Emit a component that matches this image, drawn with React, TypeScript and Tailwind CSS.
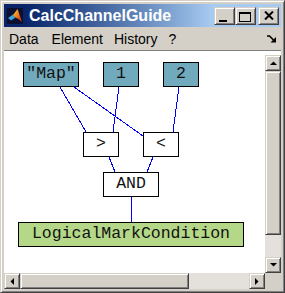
import React from 'react'

const raised =
  'bg-[#d4d0c8] border border-t-[#d4d0c8] border-l-[#d4d0c8] border-r-[#404040] border-b-[#404040] shadow-[inset_1px_1px_0_#fff,inset_-1px_-1px_0_#808080]'

const node =
  "absolute flex items-center justify-center border border-black font-['Liberation_Mono',monospace] text-[16.5px] leading-none text-[#111]"

function MatlabIcon() {
  return (
    <svg width="16" height="16" viewBox="0 0 16 16">
      <defs>
        <linearGradient id="peak" x1="0" y1="0" x2="1" y2="1">
          <stop offset="0" stopColor="#ffd23a" />
          <stop offset="0.5" stopColor="#f07a1a" />
          <stop offset="1" stopColor="#b8220e" />
        </linearGradient>
      </defs>
      <rect width="16" height="16" fill="#0c1030" />
      <polygon points="1,10 6,6.5 8.5,9.5 4,12.5" fill="#3fa3d8" />
      <polygon points="6,7 10.5,1 15,14 11.5,11 8.5,9.5" fill="url(#peak)" />
    </svg>
  )
}

function Arrow({ dir }: { dir: 'up' | 'down' | 'left' | 'right' }) {
  const pts = {
    up: '0,4 7,4 3.5,0.5',
    down: '0,0 7,0 3.5,3.5',
    left: '4,0 4,7 0.5,3.5',
    right: '0,0 0,7 3.5,3.5',
  }[dir]
  const w = dir === 'up' || dir === 'down' ? 7 : 4
  const h = dir === 'up' || dir === 'down' ? 4 : 7
  return (
    <svg width={w} height={h} viewBox={`0 0 ${w} ${h}`}>
      <polygon points={pts} fill="#000" />
    </svg>
  )
}

export default function App() {
  return (
    <div
      className={`w-[285px] h-[293px] p-[3px] flex flex-col font-['Liberation_Sans',sans-serif] select-none ${raised}`}
    >
      {/* title bar */}
      <div className="h-[23px] flex items-center pl-[3px] pr-[2px] bg-linear-to-r from-[#0a246a] from-[8%] to-[#a6caf0] to-[75%]">
        <MatlabIcon />
        <span className="ml-[6px] text-white font-bold text-[16px] leading-none">CalcChannelGuide</span>
        <div className="ml-auto flex items-center">
          <button className={`w-[21px] h-[18px] relative ${raised}`}>
            <span className="absolute left-[4px] top-[12px] w-[8px] h-[2px] bg-black" />
          </button>
          <button className={`w-[21px] h-[18px] relative ${raised}`}>
            <span className="absolute left-[3px] top-[4px] w-[12px] h-[10px] border border-black border-t-2" />
          </button>
          <button className={`ml-[2px] w-[21px] h-[18px] flex items-center justify-center ${raised}`}>
            <svg width="10" height="9" viewBox="0 0 10 9">
              <path d="M1 0.5 L9 8.5 M9 0.5 L1 8.5" stroke="#000" strokeWidth="2" />
            </svg>
          </button>
        </div>
      </div>

      {/* menu bar */}
      <div className="h-[23px] flex items-center pl-[5px] pr-[4px] gap-[11px] text-[14px] text-black leading-none">
        <span>Data</span>
        <span className="ml-[2px]">Element</span>
        <span>History</span>
        <span>?</span>
        <svg className="ml-auto" width="10" height="8" viewBox="0 0 10 8">
          <path d="M0 1 H2.5 L6.5 5" stroke="#000" strokeWidth="1.6" fill="none" />
          <polygon points="9,7.5 3.5,7.5 9,2" fill="#000" />
        </svg>
      </div>

      {/* client area */}
      <div className="flex-1 flex flex-col border-t border-[#808080]">
        <div className="flex-1 flex">
          <div className="relative flex-1 bg-white overflow-hidden">
            <svg className="absolute inset-0" width="261" height="222" shapeRendering="crispEdges">
              <g stroke="#0000ff" strokeWidth="1">
                <line x1="56" y1="36" x2="82" y2="81" />
                <line x1="70" y1="36" x2="139" y2="85" />
                <line x1="115" y1="36" x2="109" y2="81" />
                <line x1="175" y1="36" x2="169" y2="81" />
                <line x1="105" y1="106" x2="111" y2="121" />
                <line x1="149" y1="106" x2="143" y2="121" />
                <line x1="127.5" y1="146" x2="127.5" y2="171" />
              </g>
            </svg>
            <div className={`${node} left-[19px] top-[11px] w-[56px] h-[25px] bg-[#72aabd]`}>"Map"</div>
            <div className={`${node} left-[99px] top-[11px] w-[36px] h-[25px] bg-[#72aabd]`}>1</div>
            <div className={`${node} left-[159px] top-[11px] w-[36px] h-[25px] bg-[#72aabd]`}>2</div>
            <div className={`${node} left-[79px] top-[81px] w-[36px] h-[25px] bg-white`}>&gt;</div>
            <div className={`${node} left-[139px] top-[81px] w-[36px] h-[25px] bg-white`}>&lt;</div>
            <div className={`${node} left-[99px] top-[121px] w-[56px] h-[25px] bg-white`}>AND</div>
            <div className={`${node} left-[14px] top-[171px] w-[226px] h-[25px] bg-[#b4d887]`}>
              LogicalMarkCondition
            </div>
          </div>

          {/* vertical scrollbar */}
          <div className="w-[16px] flex flex-col bg-white pt-[4px]">
            <div className={`h-[16px] flex items-center justify-center ${raised}`}>
              <Arrow dir="up" />
            </div>
            <div className={`h-[164px] ${raised}`} />
            <div className="flex-1 bg-[#e4e1dc]" />
            <div className={`h-[16px] flex items-center justify-center ${raised}`}>
              <Arrow dir="down" />
            </div>
          </div>
        </div>

        {/* horizontal scrollbar */}
        <div className="h-[16px] flex">
          <div className="flex-1 flex">
            <div className={`w-[16px] flex items-center justify-center ${raised}`}>
              <Arrow dir="left" />
            </div>
            <div className={`w-[169px] ${raised}`} />
            <div className="flex-1 bg-[#e4e1dc]" />
            <div className={`w-[16px] flex items-center justify-center ${raised}`}>
              <Arrow dir="right" />
            </div>
          </div>
          <div className="w-[16px] bg-[#d4d0c8]" />
        </div>
      </div>
    </div>
  )
}
